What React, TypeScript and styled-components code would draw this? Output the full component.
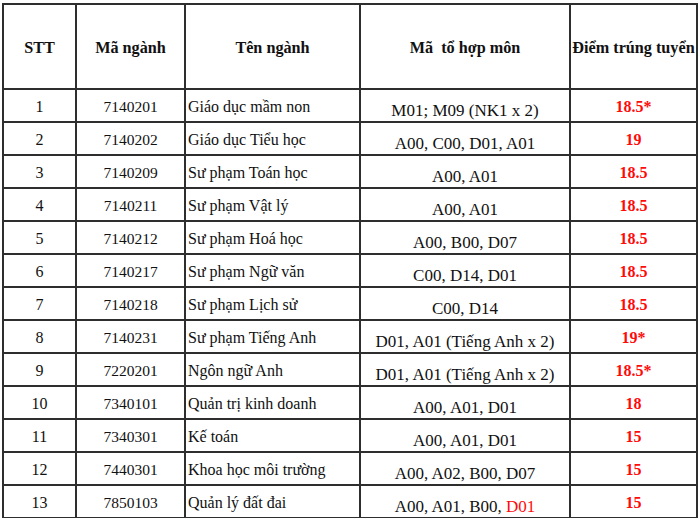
import React from 'react';
import styled, { createGlobalStyle } from 'styled-components';

const GlobalStyle = createGlobalStyle`
  html, body {
    margin: 0;
    padding: 0;
    background: #ffffff;
  }
  body, table, th, td {
    font-family: "Liberation Serif", "Times New Roman", serif;
    color: #111;
  }
`;

const Page = styled.div`
  padding: 3px 0 0 2px;
  width: 700px;
  height: 518px;
  box-sizing: border-box;
  overflow: hidden;
`;

const Table = styled.table`
  border-collapse: collapse;
  table-layout: fixed;
  width: 694px;
  font-family: "Liberation Serif", "Times New Roman", serif;
  font-size: 16px;
`;

const HeadCell = styled.th<{ $w: number }>`
  width: ${(p) => p.$w}px;
  height: 85px;
  border: 2px solid #2e2e2e;
  font-weight: 700;
  font-size: 16.2px;
  text-align: center;
  vertical-align: middle;
  padding: 3px 0 0 0;
  white-space: nowrap;
  box-sizing: border-box;
`;

const Row = styled.tr`
  height: 33px;
`;

const Cell = styled.td<{ $align?: 'left' | 'center'; $size?: number }>`
  border: 2px solid #2e2e2e;
  padding: ${(p) => (p.$align === 'left' ? '2px 0 0 2px' : '2px 0 0 0')};
  text-align: ${(p) => p.$align ?? 'center'};
  vertical-align: middle;
  white-space: nowrap;
  line-height: 18px;
  font-size: ${(p) => p.$size ?? 16}px;
`;

const ComboCell = styled.td`
  border: 2px solid #2e2e2e;
  padding: 0 0 1px 0;
  text-align: center;
  vertical-align: bottom;
  white-space: nowrap;
  line-height: 18px;
  font-size: 17px;
`;

const Score = styled.span`
  color: #ff0a0a;
  font-weight: 700;
`;

const RedText = styled.span`
  color: #ff0a0a;
`;

type Major = {
  stt: number;
  code: string;
  name: string;
  combo: React.ReactNode;
  score: string;
};

const majors: Major[] = [
  { stt: 1, code: '7140201', name: 'Giáo dục mầm non', combo: 'M01; M09 (NK1 x 2)', score: '18.5*' },
  { stt: 2, code: '7140202', name: 'Giáo dục Tiểu học', combo: 'A00, C00, D01, A01', score: '19' },
  { stt: 3, code: '7140209', name: 'Sư phạm Toán học', combo: 'A00, A01', score: '18.5' },
  { stt: 4, code: '7140211', name: 'Sư phạm Vật lý', combo: 'A00, A01', score: '18.5' },
  { stt: 5, code: '7140212', name: 'Sư phạm Hoá học', combo: 'A00, B00, D07', score: '18.5' },
  { stt: 6, code: '7140217', name: 'Sư phạm Ngữ văn', combo: 'C00, D14, D01', score: '18.5' },
  { stt: 7, code: '7140218', name: 'Sư phạm Lịch sử', combo: 'C00, D14', score: '18.5' },
  { stt: 8, code: '7140231', name: 'Sư phạm Tiếng Anh', combo: 'D01, A01 (Tiếng Anh x 2)', score: '19*' },
  { stt: 9, code: '7220201', name: 'Ngôn ngữ Anh', combo: 'D01, A01 (Tiếng Anh x 2)', score: '18.5*' },
  { stt: 10, code: '7340101', name: 'Quản trị kinh doanh', combo: 'A00, A01, D01', score: '18' },
  { stt: 11, code: '7340301', name: 'Kế toán', combo: 'A00, A01, D01', score: '15' },
  { stt: 12, code: '7440301', name: 'Khoa học môi trường', combo: 'A00, A02, B00, D07', score: '15' },
  {
    stt: 13,
    code: '7850103',
    name: 'Quản lý đất đai',
    combo: (
      <>
        A00, A01, B00, <RedText>D01</RedText>
      </>
    ),
    score: '15',
  },
];

const App: React.FC = () => {
  return (
    <>
      <GlobalStyle />
      <Page>
        <Table>
          <thead>
            <tr>
              <HeadCell $w={73}>STT</HeadCell>
              <HeadCell $w={109}>Mã ngành</HeadCell>
              <HeadCell $w={175}>Tên ngành</HeadCell>
              <HeadCell $w={210}>Mã&nbsp; tổ hợp môn</HeadCell>
              <HeadCell $w={127}>Điểm trúng tuyển</HeadCell>
            </tr>
          </thead>
          <tbody>
            {majors.map((m) => (
              <Row key={m.stt}>
                <Cell>{m.stt}</Cell>
                <Cell $size={15.5}>{m.code}</Cell>
                <Cell $align="left">{m.name}</Cell>
                <ComboCell>{m.combo}</ComboCell>
                <Cell>
                  <Score>{m.score}</Score>
                </Cell>
              </Row>
            ))}
          </tbody>
        </Table>
      </Page>
    </>
  );
};

export default App;
